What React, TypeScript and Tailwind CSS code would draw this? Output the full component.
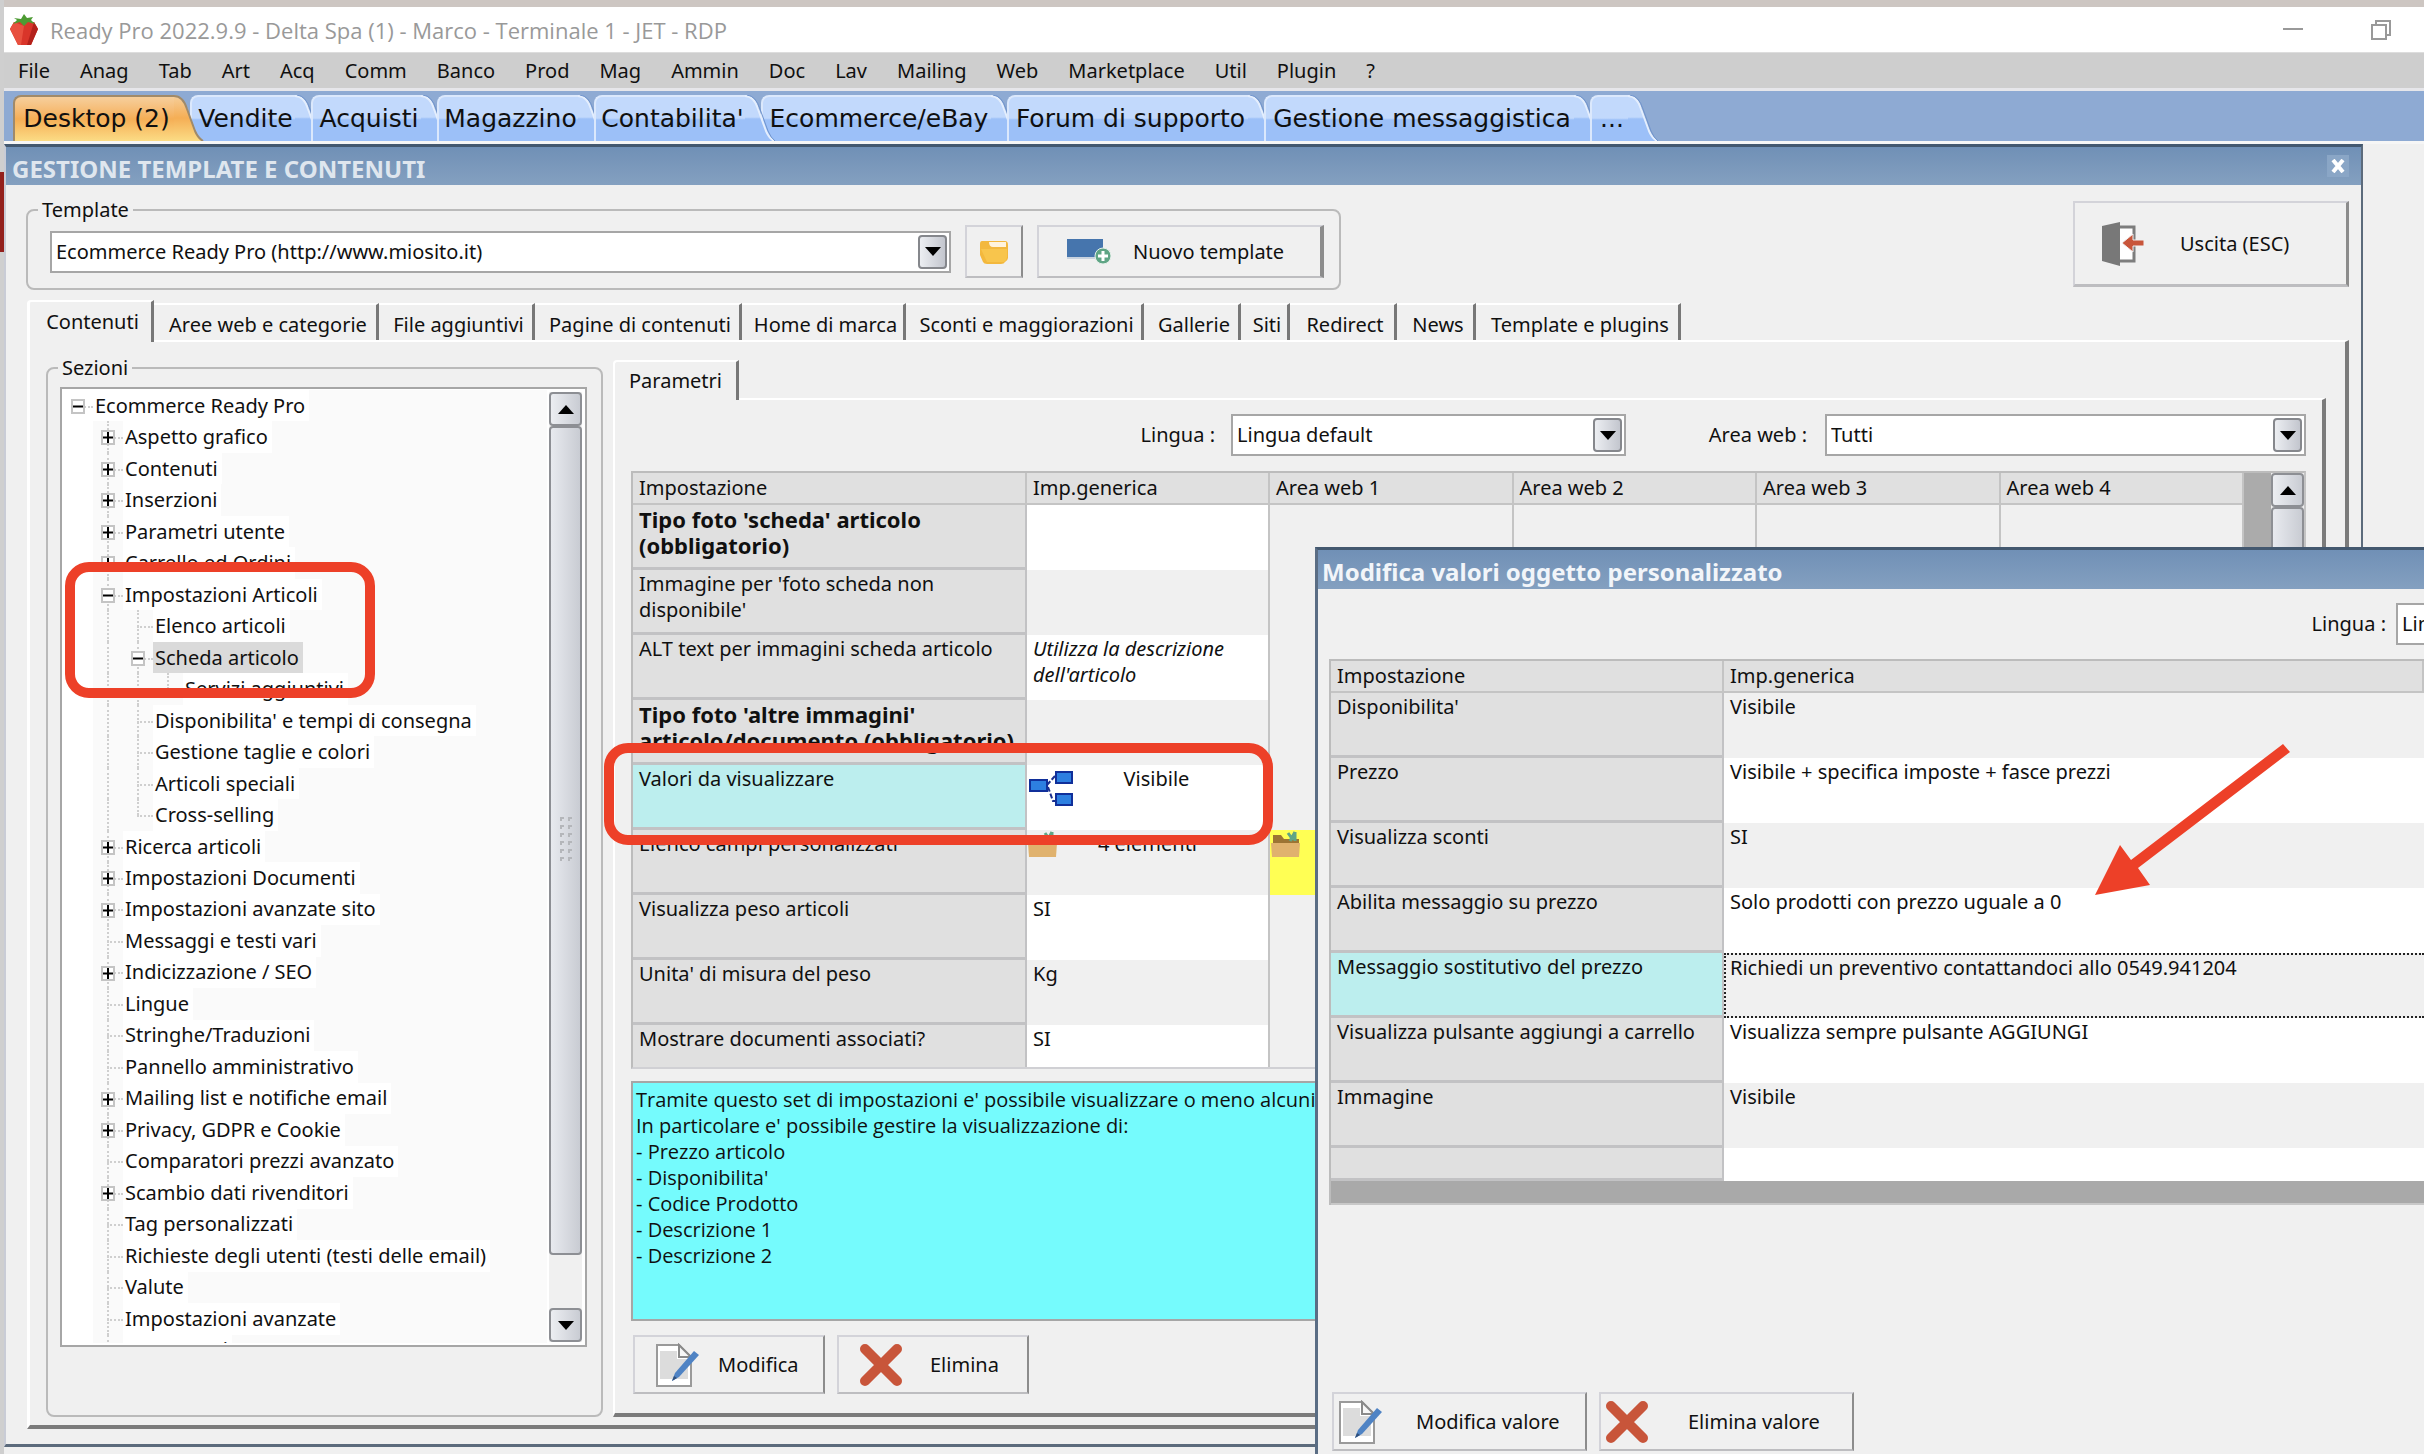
import type { ReactNode } from 'react'
import clsx from 'clsx'

const menu = ['File', 'Anag', 'Tab', 'Art', 'Acq', 'Comm', 'Banco', 'Prod', 'Mag', 'Ammin', 'Doc', 'Lav', 'Mailing', 'Web', 'Marketplace', 'Util', 'Plugin', '?']

const desktops = [
  { label: 'Desktop (2)', width: 'w-[161px]' },
  { label: 'Vendite', width: 'w-[105px]' },
  { label: 'Acquisti', width: 'w-[110px]' },
  { label: 'Magazzino', width: 'w-[141px]' },
  { label: "Contabilita'", width: 'w-[151px]' },
  { label: 'Ecommerce/eBay', width: 'w-[230px]' },
  { label: 'Forum di supporto', width: 'w-[241px]' },
  { label: 'Gestione messaggistica', width: 'w-[310px]' },
  { label: '...', width: 'w-[38px]' },
]

const tabs = [
  { label: 'Aree web e categorie', width: 'w-[225px]' },
  { label: 'File aggiuntivi', width: 'w-[156px]' },
  { label: 'Pagine di contenuti', width: 'w-[207px]' },
  { label: 'Home di marca', width: 'w-[164px]' },
  { label: 'Sconti e maggiorazioni', width: 'w-[238px]' },
  { label: 'Gallerie', width: 'w-[97px]' },
  { label: 'Siti', width: 'w-[49px]' },
  { label: 'Redirect', width: 'w-[107px]' },
  { label: 'News', width: 'w-[79px]' },
  { label: 'Template e plugins', width: 'w-[205px]' },
]

interface Node { label: string; level: number; box?: '+' | '-'; last?: boolean; selected?: boolean }

const tree: Node[] = [
  { label: 'Ecommerce Ready Pro', level: 0, box: '-' },
  { label: 'Aspetto grafico', level: 1, box: '+' },
  { label: 'Contenuti', level: 1, box: '+' },
  { label: 'Inserzioni', level: 1, box: '+' },
  { label: 'Parametri utente', level: 1, box: '+' },
  { label: 'Carrello ed Ordini', level: 1, box: '+' },
  { label: 'Impostazioni Articoli', level: 1, box: '-' },
  { label: 'Elenco articoli', level: 2 },
  { label: 'Scheda articolo', level: 2, box: '-', selected: true },
  { label: 'Servizi aggiuntivi', level: 3, last: true },
  { label: "Disponibilita' e tempi di consegna", level: 2 },
  { label: 'Gestione taglie e colori', level: 2 },
  { label: 'Articoli speciali', level: 2 },
  { label: 'Cross-selling', level: 2, last: true },
  { label: 'Ricerca articoli', level: 1, box: '+' },
  { label: 'Impostazioni Documenti', level: 1, box: '+' },
  { label: 'Impostazioni avanzate sito', level: 1, box: '+' },
  { label: 'Messaggi e testi vari', level: 1 },
  { label: 'Indicizzazione / SEO', level: 1, box: '+' },
  { label: 'Lingue', level: 1 },
  { label: 'Stringhe/Traduzioni', level: 1 },
  { label: 'Pannello amministrativo', level: 1 },
  { label: 'Mailing list e notifiche email', level: 1, box: '+' },
  { label: 'Privacy, GDPR e Cookie', level: 1, box: '+' },
  { label: 'Comparatori prezzi avanzato', level: 1 },
  { label: 'Scambio dati rivenditori', level: 1, box: '+' },
  { label: 'Tag personalizzati', level: 1 },
  { label: 'Richieste degli utenti (testi delle email)', level: 1 },
  { label: 'Valute', level: 1 },
  { label: 'Impostazioni avanzate', level: 1 },
  { label: 'Frammenti', level: 1 },
]

interface Setting { name: string; value?: string; bold?: boolean; italic?: boolean; active?: boolean; icon?: 'nodes' | 'folder' }

const settings: Setting[] = [
  { name: "Tipo foto 'scheda' articolo (obbligatorio)", bold: true },
  { name: "Immagine per 'foto scheda non disponibile'" },
  { name: 'ALT text per immagini scheda articolo', value: "Utilizza la descrizione dell'articolo", italic: true },
  { name: "Tipo foto 'altre immagini' articolo/documento (obbligatorio)", bold: true },
  { name: 'Valori da visualizzare', value: 'Visibile', active: true, icon: 'nodes' },
  { name: 'Elenco campi personalizzati', value: '4 elementi', icon: 'folder' },
  { name: 'Visualizza peso articoli', value: 'SI' },
  { name: "Unita' di misura del peso", value: 'Kg' },
  { name: 'Mostrare documenti associati?', value: 'SI' },
]

const values: Setting[] = [
  { name: "Disponibilita'", value: 'Visibile' },
  { name: 'Prezzo', value: 'Visibile + specifica imposte + fasce prezzi' },
  { name: 'Visualizza sconti', value: 'SI' },
  { name: 'Abilita messaggio su prezzo', value: 'Solo prodotti con prezzo uguale a 0' },
  { name: 'Messaggio sostitutivo del prezzo', value: 'Richiedi un preventivo contattandoci allo 0549.941204', active: true },
  { name: 'Visualizza pulsante aggiungi a carrello', value: 'Visualizza sempre pulsante AGGIUNGI' },
  { name: 'Immagine', value: 'Visibile' },
]

function Strawberry() {
  return (
    <svg className="h-8 w-7" viewBox="0 0 28 32" aria-hidden="true">
      <path d="M4 8 L24 8 L28 15 L21 31 L8 31 L0 15 Z" fill="#d9352a" />
      <path d="M4 8 L14 12 L11 31 L8 31 L0 15 Z" fill="#e8503f" />
      <path d="M24 8 L28 15 L21 31 L17 31 Z" fill="#b3211b" />
      <path d="M3 10 L7 6 L4 4 L11 5 L14 0 L17 4 L23 3 L21 6 L25 10 L18 8 L14 12 L10 8 Z" fill="#4d9b33" />
    </svg>
  )
}

function EditIcon() {
  return (
    <svg className="h-[44px] w-[44px] shrink-0" viewBox="0 0 44 44" aria-hidden="true">
      <path d="M2 2 H24 L36 14 V43 H2 Z" fill="#fff" stroke="#9a9a9a" strokeWidth="2" />
      <path d="M5 8 H22 V16 H33 V36 H5 Z" fill="#dcdcdc" />
      <path d="M24 2 V14 H36 Z" fill="#f7f7f7" stroke="#8a8a8a" strokeWidth="2" />
      <path d="M39 8 L44 12 L24 34 L17 38 L20 30 Z" fill="#4f83c4" />
      <path d="M17 38 L19 33 L22 35 Z" fill="#2f4f7c" />
    </svg>
  )
}

function CrossIcon() {
  return (
    <svg className="h-[44px] w-[44px] shrink-0" viewBox="0 0 44 44" aria-hidden="true">
      <path d="M6 6 L38 38 M38 6 L6 38" stroke="#c8553a" strokeWidth="10" strokeLinecap="round" />
    </svg>
  )
}

function ExitIcon() {
  return (
    <svg className="h-[44px] w-[42px] shrink-0" viewBox="0 0 42 44" aria-hidden="true">
      <path d="M16 5 H32 V39 H16" fill="#fff" stroke="#7d7d7d" strokeWidth="3" />
      <path d="M0 4 L18 0 V44 L0 39 Z" fill="#787878" />
      <path d="M20 21 L31 12 V18 H42 V24 H31 V30 Z" fill="#c8553a" stroke="#f0f0f0" strokeWidth="1" />
    </svg>
  )
}

function TemplateIcon() {
  return (
    <svg className="h-[30px] w-[44px] shrink-0" viewBox="0 0 44 30" aria-hidden="true">
      <path d="M0 2 H36 V20 H0 Z" fill="#4675ad" />
      <path d="M0 20 H30 V22 H0 Z" fill="#c9d3df" />
      <circle cx="36" cy="19" r="8" fill="#5fa585" stroke="#e6f0ea" strokeWidth="1" />
      <path d="M36 14 V24 M31 19 H41" stroke="#fff" strokeWidth="3" />
    </svg>
  )
}

function YellowFolder() {
  return (
    <svg className="h-6 w-[30px]" viewBox="0 0 30 24" aria-hidden="true">
      <path d="M3 1 H26 Q29 1 29 5 V18 Q29 20 26 22 Q25 24 22 24 H8 Q5 24 4 22 L1 15 V4 Q1 1 3 1 Z" fill="#f3b83d" />
      <path d="M10 2 H27 V7 H14 Q10 7 10 2 Z" fill="#fff3dc" />
      <path d="M2 9 H28 V17 Q28 20 25 22 H8 Z" fill="#f8c54c" />
    </svg>
  )
}

function ElementsFolder() {
  return (
    <svg className="absolute top-0 left-px h-7 w-[30px]" viewBox="0 0 30 28" aria-hidden="true">
      <path d="M2 5 H10 L13 9 H28 V14 H2 Z" fill="#9c7433" />
      <path d="M17 3 L22 10 M24 2 L19 11 M24 2 V11" stroke="#5fa585" strokeWidth="3" fill="none" />
      <path d="M0 13 H29 L28 27 H1 Z" fill="#e0b26e" />
    </svg>
  )
}

function NodesIcon() {
  return (
    <svg className="absolute top-[6px] left-px h-[36px] w-[46px]" viewBox="0 0 46 36" aria-hidden="true">
      <path d="M19 14 L27 5 M20 16 L25 30 H28" stroke="#1a2f8f" strokeWidth="2" strokeDasharray="5 2" fill="none" />
      <g fill="#2d7fe0" stroke="#102f9a" strokeWidth="2">
        <rect x="2" y="9" width="17" height="11" />
        <rect x="28" y="1" width="16" height="11" />
        <rect x="28" y="23" width="16" height="11" />
      </g>
    </svg>
  )
}

function Arrow({ up = false }: { up?: boolean }) {
  return (
    <svg className="h-[9px] w-[16px]" viewBox="0 0 16 9" aria-hidden="true">
      <path d={up ? 'M8 0 L16 9 H0 Z' : 'M0 0 H16 L8 9 Z'} />
    </svg>
  )
}

function Select({ id, value, className }: { id: string; value: string; className?: string }) {
  return (
    <div className={clsx('relative h-[42px] shrink-0', className)}>
      <select id={id} className="h-full w-full appearance-none border-2 border-[#a6a6a6] bg-white pl-1 outline-none">
        <option>{value}</option>
      </select>
      <span className="pointer-events-none absolute top-1 right-1 flex h-[34px] w-[29px] items-center justify-center rounded border-2 border-[#85878c] bg-linear-to-r from-[#eceef2] to-[#c3c6ce]">
        <Arrow />
      </span>
    </div>
  )
}

function ToolButton({ children, className, label }: { children?: ReactNode; className?: string; label?: string }) {
  return (
    <button aria-label={label} className={clsx('flex shrink-0 items-center border-2 border-t-[#d3d3d9] border-r-[#8c8c8c] border-b-[#bdbdc0] border-l-[#d3d3d9]', className)}>
      {children}
    </button>
  )
}

function ScrollButton({ up }: { up?: boolean }) {
  return (
    <button aria-label={up ? 'Su' : 'Giù'} className="flex h-[34px] w-full shrink-0 items-center justify-center rounded border-2 border-[#8d8f94] bg-linear-to-r from-[#eceef2] to-[#c9ccd3]">
      <Arrow up={up} />
    </button>
  )
}

function TreeRow({ node }: { node: Node }) {
  const cols = Array.from({ length: node.level + 1 }, (_, i) => i)
  return (
    <li className="flex min-h-0 flex-1 items-stretch">
      {cols.map((c) => (
        <span key={c} className={clsx('relative w-[30px] shrink-0', c === 0 && 'bg-white')}>
          {c > 0 && <span className={clsx('absolute top-0 left-[14px] border-l-2 border-dotted border-[#cfcfcf]', c === node.level && node.last ? 'h-1/2' : 'h-full')} />}
          {c === node.level && <span className="absolute top-1/2 right-0 left-[14px] border-t-2 border-dotted border-[#cfcfcf]" />}
          {c === node.level && node.box && (
            <svg className="absolute top-[9px] left-2 h-[15px] w-[14px]" viewBox="0 0 14 15" aria-hidden="true">
              <rect x="1" y="1" width="12" height="13" fill="#fff" stroke="#c4c4c4" strokeWidth="2" />
              <path d={node.box === '+' ? 'M2 7.5 H12 M7 2 V13' : 'M2 7.5 H12'} stroke="#000" strokeWidth="2" />
            </svg>
          )}
        </span>
      ))}
      <span className={clsx('flex items-center pr-1 pl-[2px] whitespace-nowrap', node.selected ? 'bg-[#dadada]' : 'bg-white')}>{node.label}</span>
    </li>
  )
}

const headCell = 'h-[32px] border-r-2 border-b-2 border-[#c4c4c4] bg-[#e0e0e0] px-[6px] text-left font-normal'
const nameCell = 'border-r-2 border-b-[3px] border-[#c2c2c4] px-[6px] pt-px align-top leading-[26px] font-normal text-left'

function SettingsTable() {
  return (
    <table className="w-full table-fixed border-separate border-spacing-0">
      <thead>
        <tr>
          <th className={clsx(headCell, 'w-[394px]')}>Impostazione</th>
          <th className={clsx(headCell, 'w-[243px]')}>Imp.generica</th>
          {[1, 2, 3, 4].map((n) => <th key={n} className={headCell}>Area web {n}</th>)}
        </tr>
      </thead>
      <tbody>
        {settings.map((s, i) => (
          <tr key={s.name} className="h-[65px]">
            <th className={clsx(nameCell, s.active ? 'bg-[#bceeee]' : 'bg-[#e0e0e0]')}>
              {s.bold ? <b className="-mr-2 block text-[22px]">{s.name}</b> : s.name}
            </th>
            <td className={clsx('relative border-r-2 border-[#c4c4c4] px-[6px] pt-px align-top leading-[26px]', i % 2 ? 'bg-[#f0f0f0]' : 'bg-white', s.italic && 'italic', s.icon && 'text-center', s.icon === 'nodes' && 'pl-6')}>
              {s.icon === 'nodes' && <NodesIcon />}
              {s.icon === 'folder' && <ElementsFolder />}
              {s.value}
            </td>
            {[1, 2, 3, 4].map((n) => (
              <td key={n} className={clsx('relative border-r-2 border-[#c4c4c4]', s.icon === 'folder' && n === 1 && 'bg-[#ffff54]')}>
                {s.icon === 'folder' && n === 1 && <ElementsFolder />}
              </td>
            ))}
          </tr>
        ))}
      </tbody>
    </table>
  )
}

function TemplateWindow() {
  return (
    <section className="mr-[61px] border-x-2 border-t-[3px] border-b-[3px] border-t-[#43586f] border-r-[#5c6b7c] border-b-[#5c6b7c] border-l-[#c9ccd6] bg-[#f0f0f0]">
      <header className="flex h-[38px] items-center bg-linear-to-b from-[#7090b6] to-[#84a0c0] pr-3 pl-[6px]">
        <h1 className="flex-1 pt-[6px] text-[24px] font-bold text-[#dfe6ee]">GESTIONE TEMPLATE E CONTENUTI</h1>
        <button aria-label="Chiudi" className="flex h-[22px] w-[22px] items-center justify-center bg-[#8aa6c6]">
          <svg className="h-[14px] w-[16px]" viewBox="0 0 16 14" aria-hidden="true">
            <path d="M3 1 L13 13 M13 1 L3 13" stroke="#fff" strokeWidth="4" />
          </svg>
        </button>
      </header>

      <div className="flex items-start justify-between pt-3 pr-3 pl-5">
        <fieldset className="w-[1315px] rounded-lg border-2 border-[#bababa] pt-[2px] pr-[15px] pb-[10px] pl-[22px]">
          <legend className="-ml-3 px-1 leading-[26px]"><label htmlFor="template">Template</label></legend>
          <div className="flex items-center gap-[14px]">
            <Select id="template" value="Ecommerce Ready Pro (http://www.miosito.it)" className="flex-1" />
            <ToolButton label="Apri cartella" className="h-[53px] w-[58px] justify-center"><YellowFolder /></ToolButton>
            <ToolButton className="h-[53px] w-[287px] gap-[22px] border-r-4 border-r-[#6f86a0] pl-[28px]"><TemplateIcon />Nuovo template</ToolButton>
          </div>
        </fieldset>
        <ToolButton className="mt-1 h-[86px] w-[276px] gap-[36px] border-r-[3px] border-b-[3px] border-b-[#8c8c8c] pl-[27px]"><ExitIcon />Uscita (ESC)</ToolButton>
      </div>

      <nav className="mt-[10px] ml-[21px] flex items-end">
        <button className="z-10 -mb-[2px] h-[42px] w-[127px] rounded-tl border-t-2 border-r-[3px] border-l-[3px] border-t-white border-r-[#777] border-l-white bg-[#f0f0f0] pl-1">Contenuti</button>
        {tabs.map((t) => (
          <button key={t.label} className={clsx('h-[37px] shrink-0 border-t-2 border-r-[3px] border-t-white border-r-[#777] pt-1 pl-[6px] whitespace-nowrap', t.width)}>{t.label}</button>
        ))}
      </nav>

      <div className="mr-3 mb-[15px] ml-[21px] flex border-t-2 border-r-4 border-b-4 border-l-[3px] border-t-white border-r-[#7b7b7b] border-b-[#7b7b7b] border-l-white pt-[13px] pr-[19px] pb-2 pl-4">
        <fieldset className="w-[557px] shrink-0 rounded-lg border-2 border-[#bababa] pl-3">
          <legend className="-ml-[2px] px-1 leading-[26px]">Sezioni</legend>
          <div className="mt-[6px] flex h-[960px] w-[527px] overflow-hidden border-2 border-[#a6a6a6] bg-white p-px">
            <div className="h-[953px] flex-1 overflow-hidden">
              <ul className="flex h-[976px] flex-col bg-[#fafafa]">
                {tree.map((n, i) => <TreeRow key={i} node={n} />)}
              </ul>
            </div>
            <div className="m-[2px] flex w-[33px] flex-col bg-[#f0f0f0]">
              <ScrollButton up />
              <div className="flex h-[829px] items-center justify-center rounded-sm border-2 border-[#8d8f94] bg-linear-to-r from-[#e8eaef] to-[#c9ccd3]">
                <svg className="h-[48px] w-[12px]" viewBox="0 0 12 48" fill="#b4b6ba" aria-hidden="true">
                  {[0, 8, 16, 24, 32, 40].map((y) => <path key={y} d={`M0 ${y} h4 v2 h-2 v2 h-2 z M8 ${y} h4 v2 h-2 v2 h-2 z`} />)}
                </svg>
              </div>
              <div className="flex-1" />
              <ScrollButton />
            </div>
          </div>
        </fieldset>

        <div className="ml-[10px] flex min-w-0 flex-1 flex-col pt-[5px]">
          <button className="z-10 -mb-[2px] h-[40px] w-[126px] rounded-tl border-t-2 border-r-[3px] border-l-2 border-t-white border-r-[#777] border-l-white bg-[#f0f0f0]">Parametri</button>
          <div className="border-t-2 border-r-4 border-b-4 border-l-2 border-t-white border-r-[#7b7b7b] border-b-[#7b7b7b] border-l-white px-4 pt-[14px] pb-[19px]">
            <div className="flex items-center justify-end">
              <label htmlFor="lingua" className="pr-4">Lingua :</label>
              <Select id="lingua" value="Lingua default" className="w-[395px]" />
              <label htmlFor="area" className="w-[199px] pr-[18px] text-right">Area web :</label>
              <Select id="area" value="Tutti" className="w-[481px]" />
            </div>
            <div className="mt-[15px] flex h-[598px] overflow-hidden border-2 border-t-[#bcbcbc] border-r-[#c4c4c4] border-b-[#d0d0d4] border-l-[#bcbcbc]">
              <div className="min-w-0 flex-1"><SettingsTable /></div>
              <div className="w-[27px] bg-[#ababab]" />
              <div className="flex w-[33px] flex-col">
                <ScrollButton up />
                <div className="flex-1 rounded-sm border-2 border-[#8d8f94] bg-linear-to-r from-[#e8eaef] to-[#c9ccd3]" />
              </div>
            </div>
            <div className="mt-3 h-[240px] border-2 border-[#a6a6a6] bg-[#75fbfd] px-[3px] pt-1 font-['Open_Sans',sans-serif] leading-[26px]">
              <p>Tramite questo set di impostazioni e' possibile visualizzare o meno alcuni</p>
              <p>In particolare e' possibile gestire la visualizzazione di:</p>
              <p>- Prezzo articolo</p>
              <p>- Disponibilita'</p>
              <p>- Codice Prodotto</p>
              <p>- Descrizione 1</p>
              <p>- Descrizione 2</p>
            </div>
            <div className="mt-[14px] flex gap-3 pl-[2px]">
              <ToolButton className="h-[59px] w-[192px] gap-[19px] pl-5"><EditIcon />Modifica</ToolButton>
              <ToolButton className="h-[59px] w-[192px] gap-[27px] pl-5"><CrossIcon />Elimina</ToolButton>
            </div>
          </div>
        </div>
      </div>
    </section>
  )
}

function ValuesDialog() {
  return (
    <section className="absolute top-[547px] right-0 bottom-0 left-[1315px] flex flex-col overflow-hidden border-t-[3px] border-l-[3px] border-t-[#43586f] border-l-[#5a6d84] bg-[#f0f0f0]">
      <header className="flex h-[39px] shrink-0 items-center bg-linear-to-b from-[#7090b6] to-[#84a0c0] pt-1 pl-1">
        <h2 className="text-[24px] font-bold text-[#f2f5f9]">Modifica valori oggetto personalizzato</h2>
      </header>
      {/* the dialog runs past the right edge of the desktop */}
      <div className="-mr-[372px] flex items-center justify-end pt-[14px]">
        <label htmlFor="lingua-valori" className="pr-[10px]">Lingua :</label>
        <Select id="lingua-valori" value="Lingua default" className="w-[400px]" />
      </div>
      <div className="mt-[14px] ml-[11px] border-t-2 border-l-2 border-[#bcbcbc]">
        <table className="w-full table-fixed border-separate border-spacing-0">
          <thead>
            <tr>
              <th className={clsx(headCell, 'w-[393px]')}>Impostazione</th>
              <th className={clsx(headCell, 'border-r-0')}>Imp.generica</th>
            </tr>
          </thead>
          <tbody>
            {values.map((v, i) => (
              <tr key={v.name} className="h-[65px]">
                <th className={clsx(nameCell, v.active ? 'bg-[#bceeee]' : 'bg-[#e0e0e0]')}>{v.name}</th>
                <td className={clsx('align-top leading-[26px]', i % 2 ? 'bg-white' : 'bg-[#f0f0f0]', v.active ? 'border-y-2 border-l-2 border-dotted border-[#222] pl-1' : 'pt-px pl-[6px]')}>{v.value}</td>
              </tr>
            ))}
            <tr className="h-[33px]">
              <td className={clsx(nameCell, 'bg-[#e0e0e0]')} />
              <td className="bg-white" />
            </tr>
          </tbody>
        </table>
        <div className="h-6 border-b-2 border-[#c8c8c8] bg-[#a9a9a9]" />
      </div>
      <div className="mt-auto mb-[3px] flex gap-3 pl-[14px]">
        <ToolButton className="h-[59px] w-[255px] gap-[34px] pl-1"><EditIcon />Modifica valore</ToolButton>
        <ToolButton className="h-[59px] w-[255px] gap-[39px] pl-1"><CrossIcon />Elimina valore</ToolButton>
      </div>
    </section>
  )
}

export default function App() {
  return (
    <div className="relative flex min-h-screen overflow-hidden bg-[#f0f0f0] font-['Noto_Sans',sans-serif] text-[20px] leading-[26px] text-[#101010]">
      <div className="w-1 shrink-0 bg-[#cfcfcf] pt-[172px]">
        <div className="h-20 bg-[#93201c]" />
      </div>

      <main className="min-w-0 flex-1">
        <div className="h-[7px] bg-[#cdc6c2]" />
        <header className="flex h-[45px] items-center bg-white pr-[33px] pl-[6px]">
          <Strawberry />
          <span className="ml-3 flex-1 font-['Open_Sans',sans-serif] text-[22px] text-[#999]">Ready Pro 2022.9.9 - Delta Spa (1) - Marco - Terminale 1 - JET - RDP</span>
          <button aria-label="Riduci a icona">
            <svg className="h-5 w-5" viewBox="0 0 20 20" aria-hidden="true"><path d="M0 9 H20" stroke="#999" strokeWidth="2" /></svg>
          </button>
          <button aria-label="Ripristina" className="ml-[68px]">
            <svg className="h-5 w-5" viewBox="0 0 20 20" fill="none" stroke="#999" strokeWidth="2" aria-hidden="true">
              <path d="M1 5 H15 V19 H1 Z M5 5 V1 H19 V15 H15" />
            </svg>
          </button>
        </header>

        <nav className="flex h-[36px] items-center gap-[30px] border-t border-[#ddd] bg-[#cecece] pl-[14px]">
          {menu.map((m) => <button key={m}>{m}</button>)}
        </nav>

        <nav className="flex h-[56px] items-end border-t-[3px] border-b-[3px] border-t-[#e6e6ea] border-b-[#f6f6f6] bg-[#8eaad3] pl-[9px]">
          {desktops.map((d, i) => (
            <button key={d.label} className={clsx('relative -mr-[14px] flex h-[46px] shrink-0 font-["DejaVu_Sans",sans-serif] text-[25px]', i === 0 ? 'z-20' : i < 5 ? 'z-10' : 'z-0')}>
              <span className={clsx('flex h-full items-center justify-center rounded-tl-lg border-t-2 border-l-2 pl-1 whitespace-nowrap', d.width, i === 0 ? 'border-[#a08a6a] bg-linear-to-b from-[#f6cf9c] via-[#f5ae55] to-[#fbdc85]' : 'border-[#dbe8fc] bg-linear-to-b from-[#c2d9fc] from-48% to-[#9cc0f8] to-52%')}>{d.label}</span>
              <svg className="h-full w-[30px]" viewBox="0 0 30 46" aria-hidden="true">
                <defs>
                  <linearGradient id={`cap${i}`} x1="0" y1="0" x2="0" y2="1">
                    <stop offset={i === 0 ? '0' : '0.48'} stopColor={i === 0 ? '#f6cf9c' : '#c2d9fc'} />
                    <stop offset={i === 0 ? '0.5' : '0.52'} stopColor={i === 0 ? '#f5ae55' : '#9cc0f8'} />
                    <stop offset="1" stopColor={i === 0 ? '#fbdc85' : '#9cc0f8'} />
                  </linearGradient>
                </defs>
                <path d="M0 0 Q9 1 13 14 L21 36 Q24 43 29 46 H0 Z" fill={`url(#cap${i})`} />
                <path d="M0 1 Q9 1 13 14 L21 36 Q24 43 29 46" fill="none" stroke={i === 0 ? '#a08a6a' : '#e4eefd'} strokeWidth="2" />
                {i > 0 && <path d="M2 0 Q11 1 15 14 L23 36 Q26 43 30 46" fill="none" stroke="#6f93cc" strokeWidth="1" />}
              </svg>
            </button>
          ))}
        </nav>

        <TemplateWindow />
      </main>

      <ValuesDialog />

      {/* callouts */}
      <div className="pointer-events-none absolute top-[562px] left-[65px] h-[136px] w-[310px] rounded-[24px] border-[10px] border-[#ed4028]" />
      <div className="pointer-events-none absolute top-[743px] left-[604px] h-[102px] w-[669px] rounded-[24px] border-[10px] border-[#ed4028]" />
      <svg className="pointer-events-none absolute top-[744px] left-[2095px] h-[152px] w-[196px]" viewBox="0 0 196 152" aria-hidden="true">
        <path d="M188 0 L195 8 L43 124 L55 141 L0 151 L25 101 L36 116 Z" fill="#ed4028" />
      </svg>
    </div>
  )
}
